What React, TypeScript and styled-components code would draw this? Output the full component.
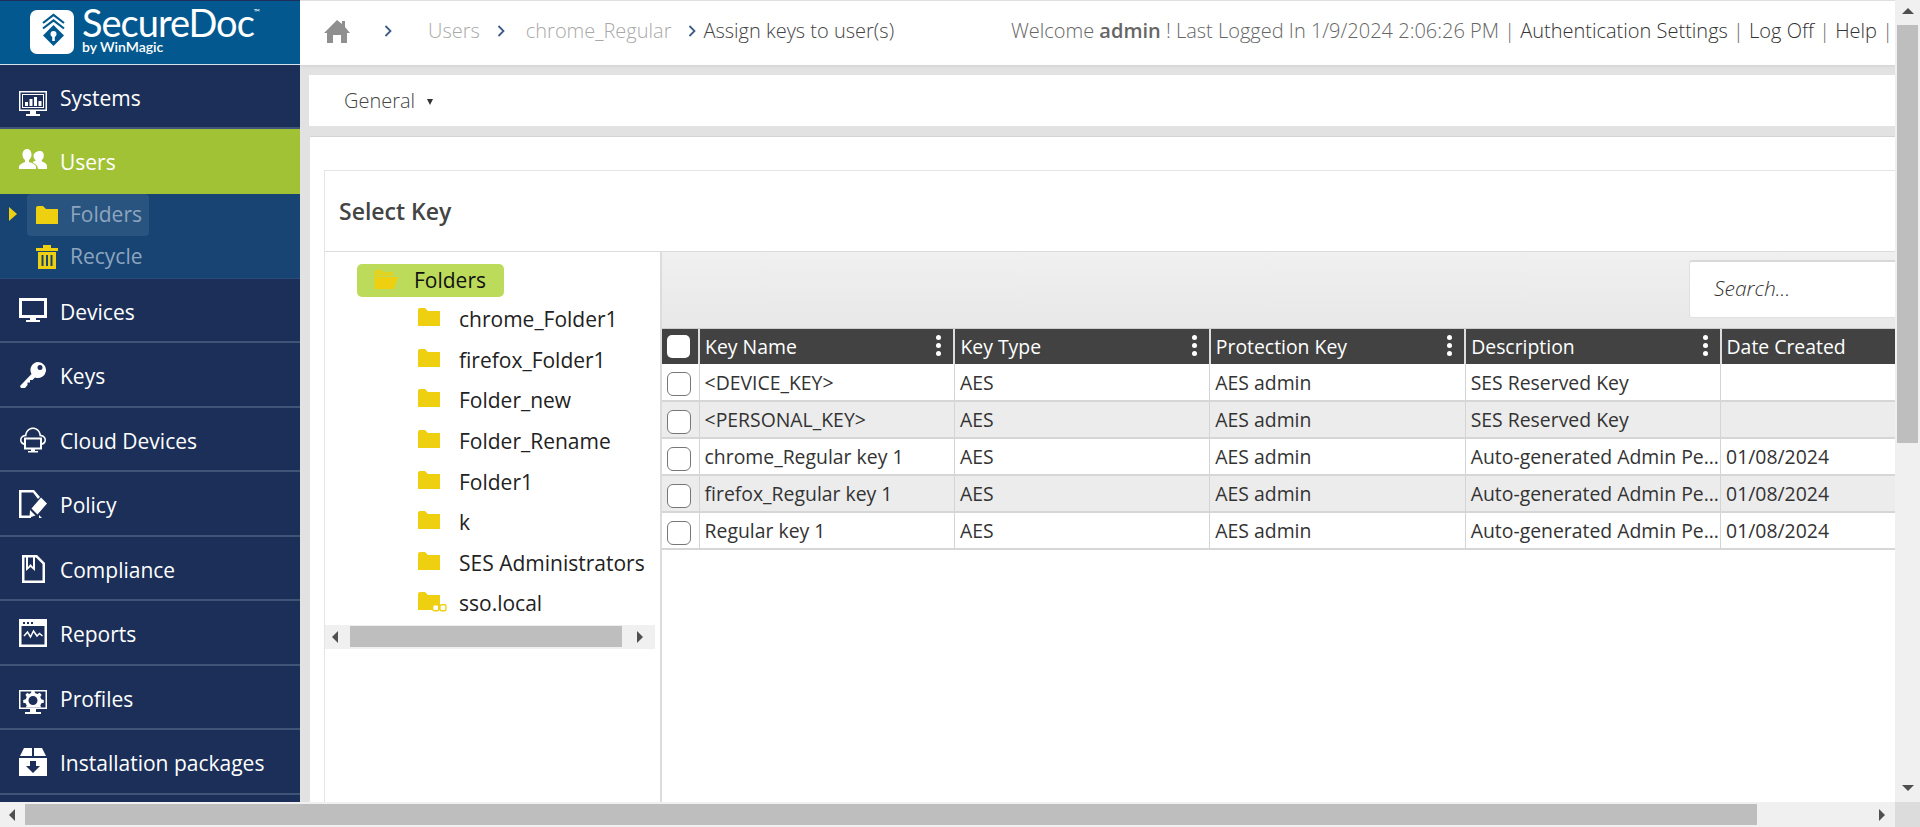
import styled, { createGlobalStyle } from "styled-components";
import { ReactNode } from "react";

const GlobalStyle = createGlobalStyle`
  html, body {
    margin: 0;
    height: 100%;
    overflow: hidden;
    background: #fff;
  }
  * {
    box-sizing: border-box;
  }
  #root {
    height: 100%;
  }
`;

const I = ({ children }: { children: ReactNode }) => (
  <svg width="28" height="28" viewBox="0 0 28 28" fill="#fff">
    {children}
  </svg>
);

const icons: Record<string, ReactNode> = {
  Systems: (
    <I>
      <path fillRule="evenodd" d="M0 1h28v20H17v3h4v2H7v-2h4v-3H0zM1.500 2.500v17h25v-17z" />
      <path fillRule="evenodd" d="M3 4h22v14H3zM4 5v12h20V5z" />
      <path d="M6 12h3v4H6zM10.500 9h3v7h-3zM15 7h3v9h-3zM19.500 11h3v5h-3z" />
    </I>
  ),
  Users: (
    <I>
      <path d="M8 1c3 0 4.500 2.500 4.500 5.500 0 2.500-1 4.500-2.500 5.500v2c3 1 7 2.500 7 5v2H0v-2c0-2.500 4-4 6-5v-2C4.500 11 3.500 9 3.500 6.500 3.500 3.500 5 1 8 1z" />
      <path d="M21 3c2.500 0 3.800 2 3.800 4.500 0 2-.8 3.600-2 4.500v1.500c2 .8 5.200 2 5.200 4.500V21h-9c0-3-2.500-5-5-6.300v-.9c.8-.4 1.700-.8 2.500-1.100v-.7c-1.200-.9-2-2.500-2-4.500C14.500 5 18.500 3 21 3z" />
    </I>
  ),
  Devices: (
    <I>
      <path fillRule="evenodd" d="M0 1h28v20H17v2h4v2H7v-2h4v-2H0zM3 4v14h22V4z" />
    </I>
  ),
  Keys: (
    <I>
      <path fillRule="evenodd" d="M19 1a8 8 0 1 1-3 15.400L13.500 19H11v2.500H8.500V24L6 27H2l-1-2 11.500-12A8 8 0 0 1 19 1zm2 3a2.500 2.500 0 1 0 0 5 2.500 2.500 0 0 0 0-5z" />
    </I>
  ),
  "Cloud Devices": (
    <I>
      <path d="M5 19C2 18.500 1 16 1 14c0-3 2-5 5-5.300C7 4 10.500 1.500 14 1.500S21 4 22 8.700c3 .3 5 2.300 5 5.300 0 2-1 4.500-4 5v-2c1.500-.5 2.500-1.800 2.500-3 0-2.200-2-3.800-5-3.700C20.500 6 17.500 3 14 3S7.500 6 7.500 10.300c-3-.1-5 1.500-5 3.700 0 1.200 1 2.500 2.500 3z" />
      <path fillRule="evenodd" d="M5 11.500h18v12h-7v1.500h3v1.500H9V25h3v-1.500H5zM7 13.500v8h14v-8z" />
    </I>
  ),
  Policy: (
    <I>
      <path d="M0 0h15l6 7-2 2-5-6.500H2.500v23H12V28H0z" />
      <path d="M22 7.500l6 6-9.500 11-6-6zM11 20l5.500 5.500-6 2z" />
      <path d="M20 25v3h3z" />
    </I>
  ),
  Compliance: (
    <I>
      <path fillRule="evenodd" d="M3 0h15l8 8v20H3zM5.500 2.500v23h18V9l-6.500-6.500z" />
      <path d="M7 2h2v10l2.500-3 2.500 3V2h2v14l-4.500-4-4.500 4z" />
    </I>
  ),
  Reports: (
    <I>
      <path fillRule="evenodd" d="M0 0h28v28H0zM2.500 7v18.500h23V7z" />
      <path d="M4 3h2v2H4zM8 3h2v2H8zM12 3h2v2h-2z" fill="#1b2f58" />
      <path d="M5 17l3.500-4 3 5 3-6 3.500 5 2.500-2.500 3 2.500" fill="none" stroke="#fff" strokeWidth="1.500" />
    </I>
  ),
  Profiles: (
    <I>
      <path fillRule="evenodd" d="M0 1h28v19H17v3h5v2H6v-2h5v-3H0zM1.500 2.500v16h25v-16z" />
      <path fillRule="evenodd" d="M12.600 1.500h2.800l.6 2.500 2.400 1 2.200-1.300 2 2-1.300 2.200 1 2.400 2.500.6v2.800l-2.500.6-1 2.400 1 1.800H6.700l1-1.800-1-2.400-2.500-.6v-2.800l2.500-.6 1-2.400-1.300-2.200 2-2L10 5l2-1zM14 7a4.500 4.500 0 1 0 0 9 4.500 4.500 0 0 0 0-9z" />
    </I>
  ),
  "Installation packages": (
    <I>
      <path d="M5 0h8v8H1zM15 0h8l4 8H15z" />
      <path fillRule="evenodd" d="M0 10h28v18H0zM11 13v5H7l7 7 7-7h-4v-5z" />
    </I>
  ),
};

const FolderGlyph = () => (
  <svg width="22" height="18" viewBox="0 0 22 18" fill="#eed011">
    <path d="M0 2q0-2 2-2h5l3 3h12v15H0z" />
  </svg>
);

const TriBtn = ({ dir }: { dir: "up" | "down" | "left" | "right" }) => {
  const d = {
    up: "M6 1l6 6H0z",
    down: "M0 1h12L6 7z",
    left: "M8 0v12L2 6z",
    right: "M2 0v12l6-6z",
  }[dir];
  return (
    <svg width="12" height="12" viewBox="0 0 12 12" fill="#505050">
      <path d={d} />
    </svg>
  );
};

const Chevron = ({ left }: { left: number }) => (
  <CrumbSep $left={left} width="8" height="12" viewBox="0 0 8 12">
    <path d="M1.500 1l5 5-5 5" fill="none" stroke="#3e5a86" strokeWidth="1.800" />
  </CrumbSep>
);

const menu = ["Devices", "Keys", "Cloud Devices", "Policy", "Compliance", "Reports", "Profiles", "Installation packages"];
const iconShift: Record<string, number> = { Systems: 6, Users: 0, Profiles: 4 };
const folders = ["chrome_Folder1", "firefox_Folder1", "Folder_new", "Folder_Rename", "Folder1", "k", "SES Administrators", "sso.local"];
const columns = ["Key Name", "Key Type", "Protection Key", "Description", "Date Created"];
const adminDesc = "Auto-generated Admin Personal Key";
const rows = [
  ["<DEVICE_KEY>", "AES", "AES admin", "SES Reserved Key", ""],
  ["<PERSONAL_KEY>", "AES", "AES admin", "SES Reserved Key", ""],
  ["chrome_Regular key 1", "AES", "AES admin", adminDesc, "01/08/2024"],
  ["firefox_Regular key 1", "AES", "AES admin", adminDesc, "01/08/2024"],
  ["Regular key 1", "AES", "AES admin", adminDesc, "01/08/2024"],
];

const App = () => (
  <Page>
    <GlobalStyle />
    <Viewport>
      <Sidebar>
        <LogoBar>
          <svg width="44" height="44" viewBox="0 0 44 44">
            <rect width="44" height="44" rx="7" fill="#fff" />
            <path d="M13 13L23.500 5 34 13M13 18.500L23.500 10.500 34 18.500" fill="none" stroke="#03598f" strokeWidth="2.200" />
            <path d="M23.500 15L34 25.500 23.500 36 13 25.500z" fill="#03598f" />
            <circle cx="23.500" cy="24" r="3" fill="#fff" />
            <rect x="22.200" y="25" width="2.600" height="6" fill="#fff" />
          </svg>
          <LogoText>
            <LogoName>
              SecureDoc<sup>™</sup>
            </LogoName>
            <LogoBy>by WinMagic</LogoBy>
          </LogoText>
        </LogoBar>
        <NavItem>
          <NavIcon $shift={iconShift.Systems}>{icons.Systems}</NavIcon>
          Systems
        </NavItem>
        <NavItem $active>
          <NavIcon $shift={iconShift.Users}>{icons.Users}</NavIcon>
          Users
        </NavItem>
        <SubNav>
          <SubRow>
            <Caret />
            <SubPill $active>
              <FolderGlyph />
              <span>Folders</span>
            </SubPill>
          </SubRow>
          <SubRow>
            <SubPill>
              <svg width="22" height="24" viewBox="0 0 22 24" fill="#eed011">
                <path fillRule="evenodd" d="M7 0h8v3h7v3H0V3h7zM2 7h18v17H2zM5.500 10v11h2V10zM10 10v11h2V10zM14.500 10v11h2V10z" />
              </svg>
              <span>Recycle</span>
            </SubPill>
          </SubRow>
        </SubNav>
        {menu.map((m) => (
          <NavItem key={m}>
            <NavIcon $shift={iconShift[m] ?? -1}>{icons[m]}</NavIcon>
            {m}
          </NavItem>
        ))}
      </Sidebar>
      <Main>
        <TopBar>
          <Crumbs>
            <svg width="26" height="24" viewBox="0 0 26 24" fill="#8f8f8f">
              <path d="M13 1l5 4V2h3v6l5 6h-3v10h-6v-8H9v8H3V14H0z" />
            </svg>
            <Chevron left={34} />
            <CrumbLink $left={36}>Users</CrumbLink>
            <Chevron left={17} />
            <CrumbLink $left={21}>chrome_Regular</CrumbLink>
            <Chevron left={17} />
            <CrumbNow>Assign keys to user(s)</CrumbNow>
          </Crumbs>
          <UserLinks>
            Welcome <b>admin</b> ! Last Logged In 1/9/2024 2:06:26 PM | <a>Authentication Settings</a> | <a>Log Off</a> | <a>Help</a> |
          </UserLinks>
        </TopBar>
        <TabBar>
          General <TabCaret />
        </TabBar>
        <Content>
          <Panel>
            <PanelTitle>Select Key</PanelTitle>
            <PanelBody>
              <Tree>
                <TreeRoot>
                  <svg width="26" height="20" viewBox="0 0 26 20" fill="#eed011">
                    <path d="M2 0h7l2 2h9v4H6L3 16H1V2z" opacity=".75" />
                    <path d="M5 7h20l-4 12H1z" />
                  </svg>
                  Folders
                </TreeRoot>
                <TreeList>
                  {folders.map((f) => (
                    <TreeItem key={f}>
                      <TreeIcon>
                        <FolderGlyph />
                        {f === "sso.local" && (
                          <svg width="15" height="8" viewBox="0 0 15 8">
                            <rect x=".7" y=".7" width="6" height="6" rx="1.500" fill="#fff" stroke="#eed011" strokeWidth="1.400" />
                            <rect x="8" y=".7" width="6" height="6" rx="1.500" fill="#fff" stroke="#eed011" strokeWidth="1.400" />
                          </svg>
                        )}
                      </TreeIcon>
                      {f}
                    </TreeItem>
                  ))}
                </TreeList>
                <TreeScroll>
                  <TriBtn dir="left" />
                  <TreeThumb />
                  <TriBtn dir="right" />
                </TreeScroll>
              </Tree>
              <GridArea>
                <GridTools>
                  <SearchBox>Search...</SearchBox>
                </GridTools>
                <Table>
                  <thead>
                    <tr>
                      <CheckTh>
                        <HeadCheck />
                      </CheckTh>
                      {columns.map((c, i) => (
                        <Th key={c}>
                          {c}
                          {i < 4 && (
                            <Dots>
                              <i />
                              <i />
                              <i />
                            </Dots>
                          )}
                        </Th>
                      ))}
                    </tr>
                  </thead>
                  <tbody>
                    {rows.map((r, i) => (
                      <Tr key={r[0]} $alt={i % 2 === 1}>
                        <CheckTd>
                          <RowCheck />
                        </CheckTd>
                        {r.map((v, j) => (
                          <Td key={j}>{v}</Td>
                        ))}
                      </Tr>
                    ))}
                  </tbody>
                </Table>
              </GridArea>
            </PanelBody>
          </Panel>
        </Content>
      </Main>
      <VScroll>
        <TriBtn dir="up" />
        <VThumb />
        <VRest />
        <TriBtn dir="down" />
      </VScroll>
    </Viewport>
    <HScroll>
      <HArrow>
        <TriBtn dir="left" />
      </HArrow>
      <HThumb />
      <HRest />
      <HArrow>
        <TriBtn dir="right" />
      </HArrow>
      <Corner />
    </HScroll>
  </Page>
);

export default App;

const Page = styled.div`
  display: flex;
  flex-direction: column;
  height: 827px;
  width: 1920px;
  overflow: hidden;
  font-family: "Open Sans", "Liberation Sans", sans-serif;
`;
const Viewport = styled.div`
  display: flex;
  height: 802px;
`;
const Sidebar = styled.nav`
  width: 300px;
  flex: none;
  overflow: hidden;
  background: #1b2f58;
`;
const LogoBar = styled.div`
  height: 63.500px;
  margin-top: 1px;
  background: #03598f;
  border-bottom: 1px solid #d6e3ec;
  display: flex;
  align-items: center;
  padding: 0 0 1px 30px;
  gap: 8px;
`;
const LogoText = styled.div`
  display: flex;
  flex-direction: column;
  margin-top: -5px;
  color: #fff;
`;
const LogoName = styled.div`
  font-size: 38px;
  line-height: 36px;
  letter-spacing: -1px;
  font-family: "Lato", "Open Sans", sans-serif;
  sup {
    font-size: 8px;
    vertical-align: 22px;
    line-height: 0;
    letter-spacing: 0;
  }
`;
const LogoBy = styled.div`
  font-size: 14px;
  line-height: 14px;
  font-weight: 600;
  font-family: "Lato", "Open Sans", sans-serif;
`;
const NavItem = styled.div<{ $active?: boolean }>`
  height: 64.500px;
  display: flex;
  align-items: center;
  color: #fff;
  font-size: 21px;
  padding: 4px 0 0 19px;
  background: ${(p) => (p.$active ? "#a2c235" : "transparent")};
  border-bottom: 2px solid ${(p) => (p.$active ? "#a2c235" : "#3f5577")};
`;
const NavIcon = styled.span<{ $shift: number }>`
  width: 41px;
  flex: none;
  display: flex;
  align-items: center;
  transform: translateY(${(p) => p.$shift}px);
`;
const SubNav = styled.div`
  height: 85px;
  background: #174473;
  border-bottom: 1px solid #2b4a78;
`;
const SubRow = styled.div`
  height: 42px;
  display: flex;
  align-items: center;
  padding-left: 27px;
  position: relative;
`;
const Caret = styled.span`
  position: absolute;
  left: 9px;
  top: 13px;
  border-left: 8px solid #eed011;
  border-top: 7px solid transparent;
  border-bottom: 7px solid transparent;
`;
const SubPill = styled.div<{ $active?: boolean }>`
  height: 42px;
  width: 122px;
  border-radius: 4px;
  display: flex;
  align-items: center;
  gap: 12px;
  padding-left: 9px;
  color: #8ea5c0;
  font-size: 21px;
  background: ${(p) => (p.$active ? "#28547f" : "transparent")};
  svg {
    flex: none;
  }
  span {
    margin-top: -1px;
  }
`;
const Main = styled.main`
  flex: 1;
  min-width: 0;
  background: #e2e2e2;
  display: flex;
  flex-direction: column;
  overflow: hidden;
`;
const TopBar = styled.header`
  height: 64px;
  margin-top: 1px;
  flex: none;
  background: #fff;
  box-shadow: 0 1px 3px rgba(0, 0, 0, 0.08);
  display: flex;
  align-items: center;
  justify-content: space-between;
  padding: 0 2px 5px 24px;
  font-size: 20px;
  font-weight: 300;
`;
const Crumbs = styled.div`
  display: flex;
  align-items: center;
`;
const CrumbSep = styled.svg<{ $left: number }>`
  margin-left: ${(p) => p.$left}px;
`;
const CrumbLink = styled.span<{ $left: number }>`
  margin-left: ${(p) => p.$left}px;
  color: #a9a9a9;
`;
const CrumbNow = styled.span`
  margin-left: 7px;
  color: #444;
`;
const UserLinks = styled.div`
  color: #666;
  white-space: pre-wrap;
  b {
    font-weight: 600;
    color: #666;
  }
  a {
    color: #333;
  }
`;
const TabBar = styled.div`
  margin: 10px 0 0 9px;
  height: 51px;
  flex: none;
  background: #fff;
  display: flex;
  align-items: center;
  padding-left: 35px;
  font-size: 20px;
  font-weight: 300;
  color: #444;
  gap: 12px;
`;
const TabCaret = styled.span`
  margin-top: 2px;
  border-top: 6px solid #333;
  border-left: 3.500px solid transparent;
  border-right: 3.500px solid transparent;
`;
const Content = styled.div`
  margin: 10px 0 0 10px;
  flex: 1;
  background: #fff;
  border-top: 1px solid #d4d4d4;
  padding: 33px 0 0 14px;
`;
const Panel = styled.section`
  height: 100%;
  border: 1px solid #e4e4e4;
  border-right: none;
  border-bottom: none;
  display: flex;
  flex-direction: column;
`;
const PanelTitle = styled.h2`
  margin: 0;
  height: 80px;
  flex: none;
  display: flex;
  align-items: center;
  padding-left: 14px;
  font-size: 23px;
  font-weight: 600;
  color: #444;
`;
const PanelBody = styled.div`
  flex: 1;
  display: flex;
  border-top: 1px solid #dcdcdc;
`;
const Tree = styled.div`
  width: 337px;
  flex: none;
  border-right: 2px solid #dcdcdc;
  padding-top: 12px;
`;
const TreeRoot = styled.div`
  margin-left: 32px;
  width: 147px;
  height: 33px;
  border-radius: 5px;
  background: #bcdb5a;
  display: flex;
  align-items: center;
  gap: 15px;
  padding: 0 0 2px 16px;
  font-size: 21px;
  color: #111;
`;
const TreeList = styled.div`
  margin-top: 2px;
`;
const TreeItem = styled.div`
  height: 40.600px;
  display: flex;
  align-items: center;
  padding-left: 93px;
  color: #222;
  font-size: 21px;
  white-space: nowrap;
`;
const TreeIcon = styled.span`
  width: 41px;
  flex: none;
  position: relative;
  display: flex;
  margin-top: -4px;
  svg + svg {
    position: absolute;
    left: 14px;
    top: 12px;
  }
`;
const TreeScroll = styled.div`
  margin-top: 1px;
  width: 330px;
  height: 24px;
  background: #f0f0f0;
  display: flex;
  align-items: center;
  padding: 0 6px 0 5px;
`;
const TreeThumb = styled.div`
  width: 272px;
  height: 21px;
  margin: 0 13px 0 8px;
  background: #bebebe;
`;
const GridArea = styled.div`
  flex: 1;
  min-width: 0;
  overflow: hidden;
`;
const GridTools = styled.div`
  height: 77px;
  background: linear-gradient(#f0f0f0, #e9e8e9);
  border-bottom: 1px solid #ccc;
  padding: 8px 0 0 1027px;
`;
const SearchBox = styled.div`
  width: 300px;
  height: 58px;
  background: #fff;
  border: 1px solid #e0e0e0;
  border-top: 2px solid #d8d8d8;
  border-radius: 3px;
  display: flex;
  align-items: center;
  padding: 0 0 3px 24px;
  font-size: 21px;
  font-weight: 300;
  font-style: italic;
  color: #333;
`;
const Table = styled.table`
  border-collapse: collapse;
  table-layout: fixed;
  width: 1314px;
  font-size: 19.400px;
`;
const Th = styled.th`
  width: 255px;
  height: 35px;
  background: #424242;
  color: #fff;
  font-weight: 400;
  text-align: left;
  padding: 0 0 0 5px;
  border-left: 2px solid #ddd;
  position: relative;
  white-space: nowrap;
`;
const CheckTh = styled.th`
  width: 37px;
  background: #424242;
  padding: 0 0 0 5px;
  text-align: left;
`;
const HeadCheck = styled.span`
  display: block;
  width: 23px;
  height: 23px;
  background: #fff;
  border-radius: 5px;
`;
const Dots = styled.span`
  position: absolute;
  right: 12px;
  top: 6px;
  display: flex;
  flex-direction: column;
  gap: 3px;
  i {
    display: block;
    width: 5px;
    height: 5px;
    border-radius: 50%;
    background: #fff;
  }
`;
const Tr = styled.tr<{ $alt: boolean }>`
  height: 37px;
  background: ${(p) => (p.$alt ? "#ececec" : "#fff")};
  border-bottom: 2px solid #d6d6d6;
`;
const Td = styled.td`
  padding: 0 0 0 5px;
  color: #333;
  border-left: 1px solid #d4d4d4;
  white-space: nowrap;
  overflow: hidden;
  text-overflow: ellipsis;
`;
const CheckTd = styled.td`
  padding: 0 0 0 5px;
`;
const RowCheck = styled.span`
  display: block;
  width: 24px;
  height: 24px;
  margin-top: 4px;
  background: #fff;
  border: 1px solid #777;
  border-radius: 6px;
`;
const VScroll = styled.div`
  width: 25px;
  flex: none;
  background: #f0f0f0;
  display: flex;
  flex-direction: column;
  align-items: center;
  padding: 7px 0 6px;
`;
const VThumb = styled.div`
  width: 21px;
  height: 418px;
  margin-top: 6px;
  background: #bebebe;
`;
const VRest = styled.div`
  flex: 1;
`;
const HScroll = styled.div`
  height: 25px;
  flex: none;
  display: flex;
  align-items: center;
  background: #f0f0f0;
`;
const HArrow = styled.div`
  width: 25px;
  flex: none;
  display: flex;
  justify-content: center;
`;
const HThumb = styled.div`
  width: 1732px;
  height: 21px;
  background: #bebebe;
`;
const HRest = styled.div`
  flex: 1;
`;
const Corner = styled.div`
  width: 25px;
  height: 25px;
  flex: none;
  background: #dcdcdc;
`;
